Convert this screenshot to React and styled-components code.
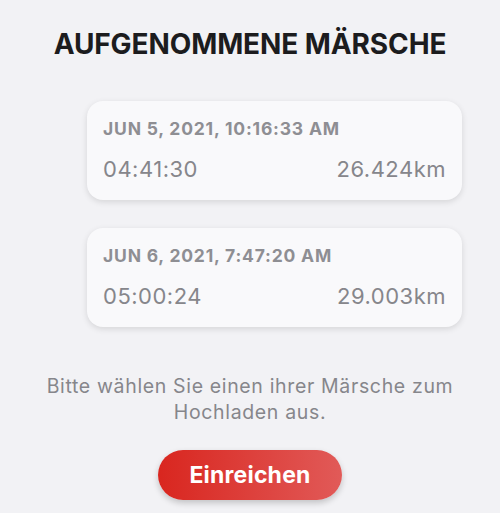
import React from 'react';
import styled, { createGlobalStyle } from 'styled-components';

const GlobalStyle = createGlobalStyle`
    html, body {
        margin: 0;
        padding: 0;
        background: #f2f2f5;
        font-family: Inter, "Noto Sans", sans-serif;
    }
`;

const Page = styled.div`
    width: 500px;
    height: 513px;
    display: flex;
    flex-direction: column;
    align-items: center;
    overflow: hidden;
`;

const Title = styled.h1`
    margin: 27px 0 0;
    font-size: 28px;
    font-weight: 700;
    color: #1c1c1e;
    line-height: 34px;
    letter-spacing: -0.1px;
`;

const List = styled.div`
    align-self: flex-end;
    margin: 40px 38px 0 0;
    width: 375px;
    display: flex;
    flex-direction: column;
    gap: 28px;
`;

const Card = styled.div`
    height: 99px;
    box-sizing: border-box;
    padding: 17px 16px 0;
    background: #f9f9fb;
    border-radius: 16px;
    box-shadow: 0 2px 6px rgba(0, 0, 0, 0.12);
`;

const Date = styled.div`
    font-size: 17.5px;
    font-weight: 700;
    color: #8e8e93;
    line-height: 22px;
    letter-spacing: 0.8px;
`;

const Row = styled.div`
    margin-top: 15px;
    display: flex;
    justify-content: space-between;
    font-size: 22px;
    color: #86868b;
    line-height: 28px;
    letter-spacing: 0.5px;
`;

const Hint = styled.p`
    margin: 46px 0 0;
    width: 440px;
    text-align: center;
    font-size: 19.5px;
    line-height: 26px;
    color: #86868b;
    letter-spacing: 0.65px;
`;

const Submit = styled.button`
    margin-top: 25px;
    width: 184px;
    height: 50px;
    border: none;
    border-radius: 25px;
    background: linear-gradient(90deg, #d9261f 0%, #e15a58 100%);
    box-shadow: 0 3px 6px rgba(0, 0, 0, 0.2);
    color: #fff;
    font-family: inherit;
    font-size: 23px;
    font-weight: 700;
    letter-spacing: 0.2px;
    cursor: pointer;
`;

const marches = [
    { date: 'JUN 5, 2021, 10:16:33 AM', time: '04:41:30', distance: '26.424km' },
    { date: 'JUN 6, 2021, 7:47:20 AM', time: '05:00:24', distance: '29.003km' },
];

const App = () => (
    <Page>
        <GlobalStyle />
        <Title>AUFGENOMMENE MÄRSCHE</Title>
        <List>
            {marches.map((m) => (
                <Card key={m.date}>
                    <Date>{m.date}</Date>
                    <Row>
                        <span>{m.time}</span>
                        <span>{m.distance}</span>
                    </Row>
                </Card>
            ))}
        </List>
        <Hint>Bitte wählen Sie einen ihrer Märsche zum Hochladen aus.</Hint>
        <Submit>Einreichen</Submit>
    </Page>
);

export default App;
